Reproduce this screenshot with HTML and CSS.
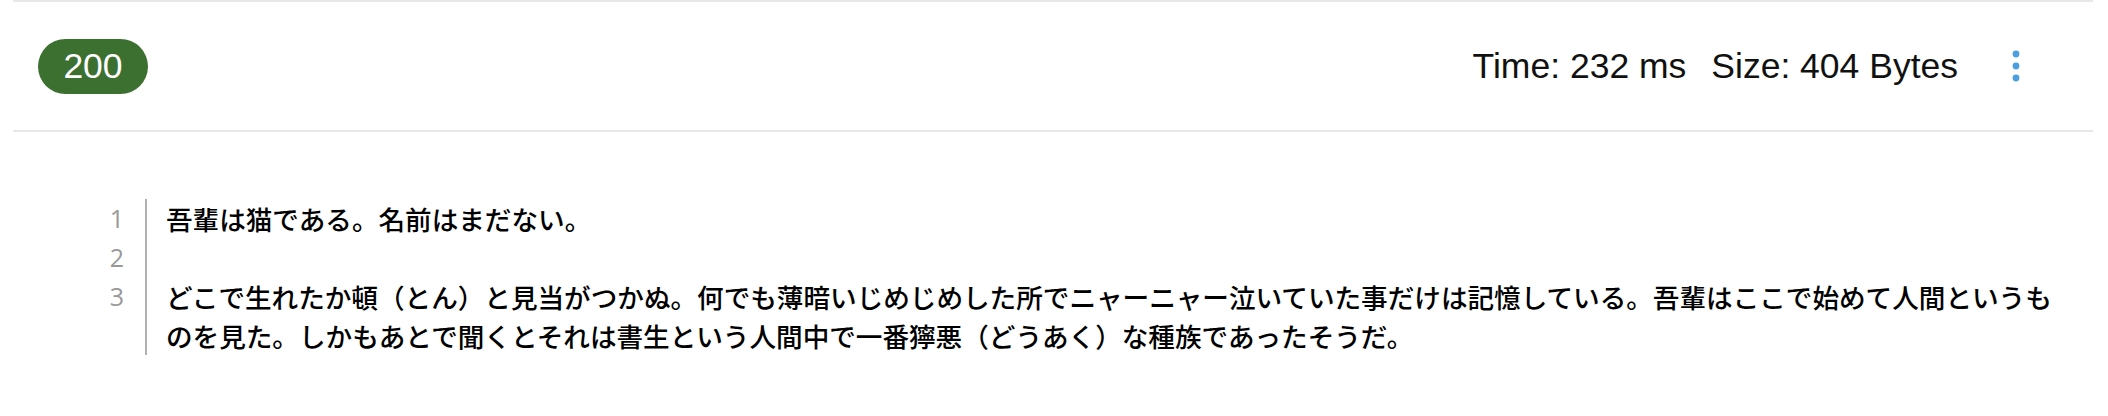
FILE: index.html
```html
<!DOCTYPE html>
<html lang="ja">
<head>
<meta charset="utf-8">
<link rel="stylesheet" href="styles.css">
</head>
<body>
<div class="panel">
  <div class="header">
    <span class="status">200</span>
    <div class="meta">
      <span class="meta-item">Time: 232 ms</span>
      <span class="meta-item">Size: 404 Bytes</span>
      <button class="menu" aria-label="More">
        <svg width="10" height="34" viewBox="0 0 10 34"><circle cx="5" cy="5" r="3.4" fill="#4a9fdf"/><circle cx="5" cy="17" r="3.4" fill="#4a9fdf"/><circle cx="5" cy="29" r="3.4" fill="#4a9fdf"/></svg>
      </button>
    </div>
  </div>
  <div class="code">
    <div class="ln">1</div><div class="tx">吾輩は猫である。名前はまだない。</div>
    <div class="ln">2</div><div class="tx"></div>
    <div class="ln">3</div><div class="tx">どこで生れたか頓（とん）と見当がつかぬ。何でも薄暗いじめじめした所でニャーニャー泣いていた事だけは記憶している。吾輩はここで始めて人間というものを見た。しかもあとで聞くとそれは書生という人間中で一番獰悪（どうあく）な種族であったそうだ。</div>
  </div>
</div>
</body>
</html>
```
FILE: styles.css
```css
html, body {
  margin: 0;
  padding: 0;
  background: #ffffff;
}
.panel {
  margin: 0 15px 0 13px;
  border-top: 2px solid #e8e8e8;
}
.header {
  display: flex;
  align-items: center;
  justify-content: space-between;
  height: 128px;
  padding-left: 25px;
  border-bottom: 2px solid #e8e8e8;
  font-family: "Liberation Sans", Arial, sans-serif;
}
.status {
  display: flex;
  align-items: center;
  justify-content: center;
  width: 110px;
  height: 55px;
  border-radius: 28px;
  background: #3c7031;
  color: #ffffff;
  font-size: 35.5px;
}
.meta {
  display: flex;
  align-items: center;
  color: #111111;
  font-size: 35.5px;
}
.meta-item + .meta-item {
  margin-left: 25px;
}
.menu {
  display: flex;
  align-items: center;
  justify-content: center;
  width: 40px;
  height: 40px;
  margin-left: 38px;
  margin-right: 57px;
  padding: 0;
  border: 0;
  background: transparent;
}
.code {
  display: grid;
  grid-template-columns: 134px 1fr;
  padding: 67px 30px 0 0;
  font-size: 26.6px;
  line-height: 39px;
}
.ln {
  text-align: right;
  padding-right: 21px;
  border-right: 2px solid #b0b0b0;
  color: #999999;
  font-family: "Open Sans", sans-serif;
  font-size: 25px;
}
.tx {
  padding-left: 19px;
  color: #000000;
  font-family: "Noto Sans CJK JP", sans-serif;
  font-weight: 500;
  min-height: 39px;
}
```
